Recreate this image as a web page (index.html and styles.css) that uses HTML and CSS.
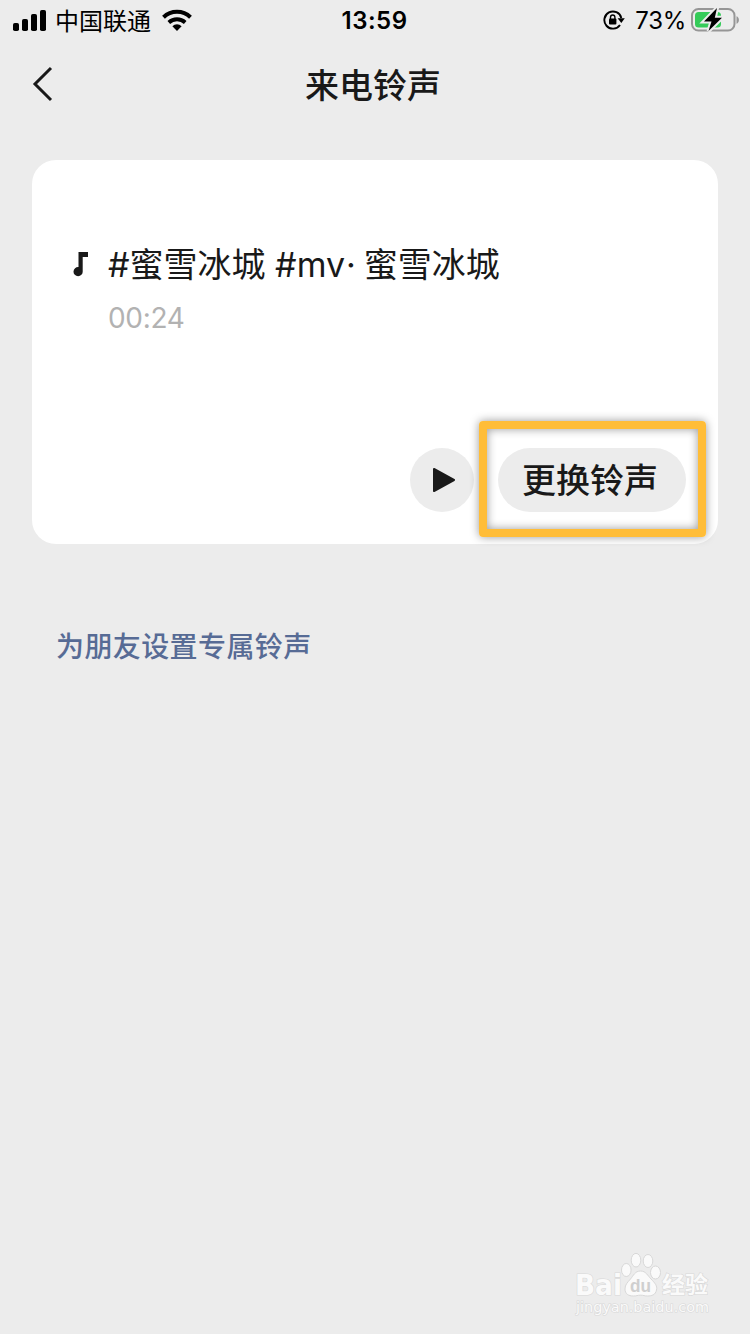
FILE: index.html
```html
<!DOCTYPE html>
<html lang="zh-CN">
<head>
    <meta charset="UTF-8">
    <meta name="viewport" content="width=device-width, initial-scale=1.0">
    <title>来电铃声</title>
    <link rel="stylesheet" href="styles.css">
</head>
<body>
    <div class="status-bar">
        <div class="status-left">
            <svg class="signal" width="33" height="21" viewBox="0 0 33 21">
                <rect x="0" y="13" width="6" height="8" rx="1.8"/>
                <rect x="9" y="9" width="6" height="12" rx="1.8"/>
                <rect x="18" y="4" width="6" height="17" rx="1.8"/>
                <rect x="27" y="0" width="6" height="21" rx="1.8"/>
            </svg>
            <span class="carrier">中国联通</span>
            <svg class="wifi" width="30" height="22" viewBox="0 0 30 22">
                <path d="M1.5 8.2a19.5 19.5 0 0 1 27 0" fill="none" stroke="#000" stroke-width="4"/>
                <path d="M6.8 13.5a12 12 0 0 1 16.4 0" fill="none" stroke="#000" stroke-width="3.8"/>
                <path d="M15 22l-4.6-4.8a6.6 6.6 0 0 1 9.2 0z"/>
            </svg>
        </div>
        <span class="clock">13:59</span>
        <div class="status-right">
            <svg class="lock" width="22" height="20" viewBox="0 0 22 20">
                <path d="M17 15A8.6 8.6 0 1 1 18.3 8" fill="none" stroke="#000" stroke-width="1.9"/>
                <path d="M14.6 8.2h7.2l-3.5 4.8z"/>
                <rect x="6" y="8.6" width="7.4" height="6" rx="1"/>
                <path d="M7.5 9V7.2a2.2 2.2 0 0 1 4.4 0V9" fill="none" stroke="#000" stroke-width="1.4"/>
            </svg>
            <span class="percent">73%</span>
            <svg class="battery" width="48" height="26" viewBox="0 0 48 26">
                <rect x="1" y="2" width="42.5" height="21.5" rx="6.5" fill="none" stroke="#969696" stroke-width="2"/>
                <path d="M45.5 9.2v7.6c1.700-.6 2.400-2 2.400-3.800s-.7-3.200-2.400-3.800z" fill="#969696"/>
                <rect x="4" y="5" width="26" height="15.500" rx="3.500" fill="#35cb59"/>
                <path d="M26 1L13 14.500h7.500L17.500 24 31 10.800h-7.200z" fill="#000" stroke="#ececec" stroke-width="4" paint-order="stroke"/>
            </svg>
        </div>
    </div>

    <header class="nav-bar">
        <svg class="back" width="22" height="36" viewBox="0 0 22 36">
            <path d="M19 2L3 18l16 16" fill="none" stroke="#191919" stroke-width="3"/>
        </svg>
        <h1>来电铃声</h1>
    </header>

    <main>
        <section class="card">
            <div class="song">
                <svg class="note" width="16" height="26" viewBox="0 0 16 26">
                    <path d="M5.500 1h9.500v5H9.700V20.500a4.600 4.600 0 1 1-4.200-4.400z" fill="#191919"/>
                </svg>
                <div class="song-info">
                    <p class="song-name">#蜜雪冰城 #mv<span class="dot">·</span>蜜雪冰城</p>
                    <p class="song-time">00:24</p>
                </div>
            </div>
            <div class="actions">
                <button class="play" aria-label="播放">
                    <svg width="24" height="26" viewBox="0 0 24 26">
                        <path d="M2 2l20 11L2 24z" fill="#191919" stroke="#191919" stroke-width="2" stroke-linejoin="round"/>
                    </svg>
                </button>
                <button class="change">更换铃声</button>
            </div>
            <div class="highlight"></div>
        </section>
        <a class="friend-link">为朋友设置专属铃声</a>
    </main>

    <footer class="watermark">
        <svg width="140" height="72" viewBox="0 0 140 72">
            <g class="wm-text">
                <text class="wm-logo" x="5" y="44.500" textLength="47" lengthAdjust="spacingAndGlyphs">Bai</text>
                <text class="wm-cn" x="92" y="43" textLength="46">经验</text>
                <text class="wm-url" x="6" y="62" textLength="133" lengthAdjust="spacingAndGlyphs">jingyan.baidu.com</text>
            </g>
            <g fill="#fafafa" stroke="#d8d8d8" stroke-width="1">
                <ellipse cx="56.300" cy="20" rx="4.800" ry="6.500"/>
                <ellipse cx="66" cy="10.200" rx="4.800" ry="6.800"/>
                <ellipse cx="78" cy="11" rx="4.800" ry="6.500"/>
                <ellipse cx="85.500" cy="22.500" rx="5" ry="6.500"/>
                <path d="M70.500 21c5.500 0 7 4.500 10.500 8 4 4 6.500 7 5.500 11-1 5-5 6-9 6-3 0-4-.8-7-.8s-4 .8-7 .8c-5 0-8.500-2-8.500-7 0-4.500 2.500-6.500 5.500-10 3-3.500 4.500-8 10-8z"/>
            </g>
            <text class="wm-du" x="60" y="42" textLength="21" lengthAdjust="spacingAndGlyphs">du</text>
        </svg>
    </footer>
</body>
</html>
```

FILE: styles.css
```css
* {
    box-sizing: border-box;
}
body {
    margin: 0;
    height: 1334px;
    display: flex;
    flex-direction: column;
    background-color: #ececec;
    color: #191919;
    font-family: Inter, "Noto Sans CJK SC", sans-serif;
    overflow: hidden;
}
h1,
p {
    margin: 0;
}
.status-bar {
    display: grid;
    grid-template-columns: 1fr auto 1fr;
    align-items: center;
    height: 40px;
    padding: 0 11px 0 13px;
    color: #000;
}
.status-left,
.status-right {
    display: flex;
    align-items: center;
}
.status-right {
    justify-content: flex-end;
}
.carrier {
    margin: 4px 11px 0 9px;
    font-size: 24px;
    line-height: 34px;
}
.clock {
    padding: 1px 3px 0 0;
    font-size: 24px;
    font-weight: 600;
    letter-spacing: 0.5px;
}
.percent {
    margin: 1px 5px 0 10px;
    font-size: 24px;
    letter-spacing: -0.3px;
}
.nav-bar {
    display: grid;
    grid-template-columns: 1fr auto 1fr;
    align-items: center;
    height: 88px;
    padding: 0 36px 0 32px;
}
.nav-bar h1 {
    padding-bottom: 2px;
    font-size: 34px;
    font-weight: 500;
}
.card {
    position: relative;
    display: flex;
    flex-direction: column;
    justify-content: space-between;
    height: 384px;
    margin: 32px 32px 0;
    padding: 80px 32px 32px 41px;
    background: #fff;
    border-radius: 24px;
}
.song {
    display: flex;
    gap: 19px;
}
.note {
    margin-top: 11px;
}
.song-name {
    padding-top: 1px;
    font-size: 34px;
    line-height: 48px;
}
.dot {
    margin: 0 8px 0 1px;
}
.song-time {
    margin-top: 9px;
    font-size: 28px;
    line-height: 40px;
    letter-spacing: -0.3px;
    color: #b2b2b2;
}
.actions {
    display: flex;
    justify-content: flex-end;
    gap: 24px;
}
.actions button {
    height: 64px;
    border: none;
    border-radius: 32px;
    background: #ececec;
    color: #191919;
    font-family: inherit;
}
.play {
    display: flex;
    align-items: center;
    justify-content: center;
    width: 64px;
    padding: 0 0 0 4px;
}
.change {
    width: 188px;
    padding: 0 4px 3px 0;
    font-size: 34px;
    font-weight: 500;
}
.highlight {
    position: absolute;
    left: 447px;
    top: 261px;
    width: 227px;
    height: 116px;
    border: 8px solid #ffbd38;
    border-radius: 4px;
    box-shadow: 0 0 10px rgba(0, 0, 0, 0.4), inset 0 0 10px rgba(0, 0, 0, 0.4);
}
.friend-link {
    display: block;
    margin: 83px 56px 0;
    font-size: 28px;
    font-weight: 500;
    line-height: 40px;
    letter-spacing: 0.4px;
    color: #576b95;
}
.watermark {
    display: flex;
    justify-content: flex-end;
    margin-top: auto;
    padding: 0 40px 12px 0;
}
.wm-text {
    fill: #fafafa;
    stroke: #d8d8d8;
    stroke-width: 1.2px;
    paint-order: stroke;
}
.wm-logo {
    font: bold 28px "DejaVu Sans", sans-serif;
}
.wm-cn {
    font: bold 23px "Noto Sans CJK SC", sans-serif;
}
.wm-url {
    font: 14px "DejaVu Sans", sans-serif;
}
.wm-du {
    font: bold 19px "Liberation Sans", sans-serif;
    fill: #cfcfcf;
}
```
